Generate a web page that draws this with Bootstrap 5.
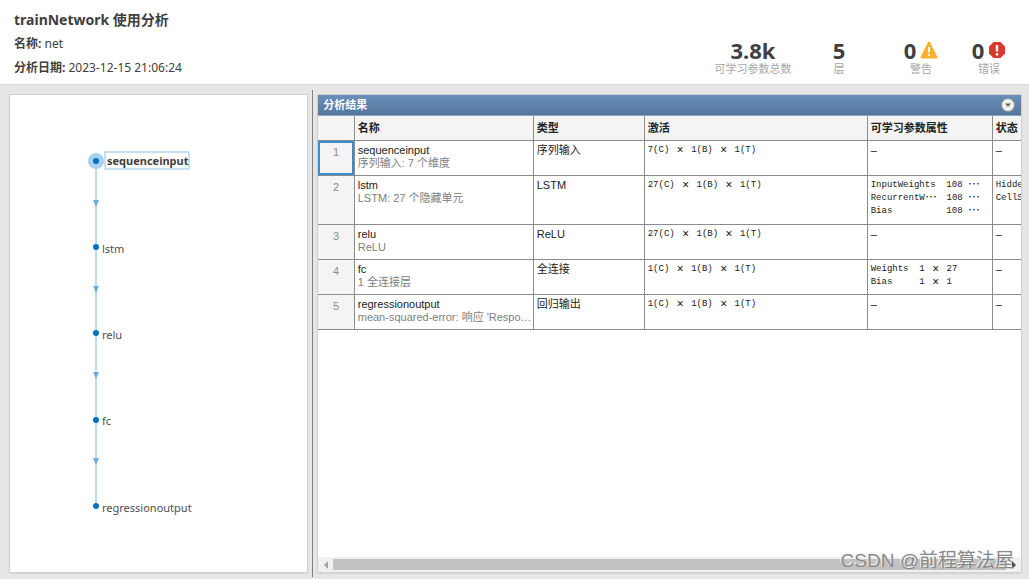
<!DOCTYPE html>
<html lang="zh-CN">
<head>
<meta charset="utf-8">
<meta name="viewport" content="width=device-width, initial-scale=1">
<title>trainNetwork 使用分析</title>
<link href="https://cdn.jsdelivr.net/npm/bootstrap@5.3.0/dist/css/bootstrap.min.css" rel="stylesheet">
<style>
  body { font-family: "Noto Sans", "Noto Sans CJK SC", sans-serif; font-size: 12px; line-height: 16px; color: #404040; background: #e6e6e6; }
  .app-head { background: #fff; border-bottom: 1px solid #d9d9d9; padding: 10px 20px 8px 14px; }
  .app-head h1 { font-size: 14px; line-height: 20px; font-weight: 700; margin-bottom: 6px; }
  .meta-line { margin-bottom: 8px; }
  .stats { display: grid; grid-template-columns: 104px 68px 96px 40px; text-align: center; white-space: nowrap; }
  .stat-num { font-size: 22px; line-height: 24px; font-weight: 700; }
  .stat-label { font-size: 11px; line-height: 14px; color: #a6a6a6; }
  .work-area { padding: 5px 8px 2px 10px; }
  .panel { background: #fff; box-shadow: 0 0 0 1px #d0d0d0, 0 1px 2px #bbb; }
  .graph-panel { flex: 0 0 29.4%; margin: 5px 0; }
  .graph-panel svg text { font-size: 11px; fill: #505050; }
  .graph-panel svg .picked { font-weight: 700; fill: #404040; }
  .splitter { flex: none; width: 1px; margin: 0 5px; background: #808080; }
  .result-panel { flex: 1 1 0; min-width: 0; margin: 5px 0; }
  .panel-title { height: 21px; padding: 0 6px 0 5px; background: linear-gradient(#6a8fb9, #54779f); color: #fff; border-bottom: 1px solid #8fa4bd; }
  .panel-title h2 { font-size: 11px; line-height: 20px; font-weight: 700; margin: 0; }
  .fold { width: 14px; height: 14px; border-radius: 50%; border: 1px solid #8c8c8c; background: #f2f2f2; padding: 0; line-height: 0; }
  .net-table { table-layout: fixed; width: 100%; font-family: "Liberation Sans", "Noto Sans CJK SC", sans-serif; font-size: 11px; line-height: 13px; color: #222; border-collapse: collapse; }
  .net-table th, .net-table td { vertical-align: top; white-space: nowrap; overflow: hidden; padding: 3px 0 5px 3px; height: 35px; border: solid #8c8c8c; border-width: 0 0 1px 1px; }
  .net-table th:first-child { border-left: 0; }
  .net-table thead th { height: 24px; background: #f4f4f4; vertical-align: middle; padding: 4px 0 2px 3px; }
  .net-table tbody th { background: #f4f4f4; color: #8c8c8c; font-weight: 400; text-align: center; padding: 5px 0 3px; }
  .net-table tbody tr.tall td { height: 49px; }
  .net-table tbody th.current { box-shadow: inset 0 0 0 2px #3a8ccb; }
  .note { color: #808080; }
  .net-table .dims { font-family: "Liberation Mono", "Noto Sans CJK SC", monospace; font-size: 9px; white-space: pre; color: #222; }
  .wide { display: inline-block; width: 11px; height: 9px; text-align: center; font-family: "Noto Sans", sans-serif; font-size: 12px; line-height: 9px; vertical-align: -2px; }
  .hbar { height: 15px; background: #f1f1f1; }
  .hbar button { width: 15px; padding: 0; border: 0; background: none; line-height: 0; }
  .thumb { background: #c1c1c1; margin: 2px 0; }
  .watermark { right: 15px; bottom: 5px; font-family: "Liberation Sans", "Noto Sans CJK SC", sans-serif; font-size: 19px; line-height: 26px; color: #8a8a8a; text-shadow: -1px -1px 0 #f4f4f4; pointer-events: none; }
</style>
</head>
<body class="d-flex flex-column min-vh-100">

<header class="app-head d-flex justify-content-between align-items-end">
  <div>
    <h1>trainNetwork 使用分析</h1>
    <div class="meta-line"><strong>名称:</strong> net</div>
    <div><strong>分析日期:</strong> 2023-12-15 21:06:24</div>
  </div>
  <div class="stats">
    <div><div class="stat-num">3.8k</div><div class="stat-label">可学习参数总数</div></div>
    <div><div class="stat-num">5</div><div class="stat-label">层</div></div>
    <div>
      <div class="stat-num d-flex justify-content-center align-items-center gap-1">0
        <svg width="18" height="18" viewBox="0 0 18 18" aria-hidden="true"><path d="M9 1.5 16.5 16.5H1.5Z" fill="#fbb12d" stroke="#fbb12d" stroke-width="2" stroke-linejoin="round"/><path d="M9 6v5.500M9 13v2" stroke="#fff" stroke-width="2"/></svg>
      </div>
      <div class="stat-label">警告</div>
    </div>
    <div>
      <div class="stat-num d-flex justify-content-center align-items-center gap-1">0
        <svg width="18" height="18" viewBox="0 0 18 18" aria-hidden="true"><path d="M5.500 1h7L17 5.500v7L12.500 17h-7L1 12.500v-7Z" fill="#d9382b"/><path d="M9 4v6.500M9 12v2.500" stroke="#fff" stroke-width="2.400"/></svg>
      </div>
      <div class="stat-label">错误</div>
    </div>
  </div>
</header>

<main class="work-area d-flex flex-grow-1">
  <section class="panel graph-panel">
    <svg width="100%" height="440" role="img" aria-label="网络图">
      <g stroke="#bcdcf0" stroke-width="2"><path d="M86 66V411"/></g>
      <g fill="#6aaedb"><path d="M83 105h6l-3 7ZM83 191h6l-3 7ZM83 277h6l-3 7ZM83 363h6l-3 7Z"/></g>
      <circle cx="86" cy="66" r="8" fill="#a9d0ec"/>
      <g fill="#0072bd">
        <circle cx="86" cy="66" r="3"/><circle cx="86" cy="152" r="3"/><circle cx="86" cy="238" r="3"/><circle cx="86" cy="325" r="3"/><circle cx="86" cy="411" r="3"/>
      </g>
      <rect x="95" y="57" width="84" height="17" fill="#fff" stroke="#8cc3e4"/>
      <text class="picked" x="97" y="70">sequenceinput</text>
      <text x="92" y="158">lstm</text>
      <text x="92" y="244">relu</text>
      <text x="92" y="330">fc</text>
      <text x="92" y="417">regressionoutput</text>
    </svg>
  </section>

  <div class="splitter"></div>

  <section class="panel result-panel d-flex flex-column">
    <div class="panel-title d-flex justify-content-between align-items-center">
      <h2>分析结果</h2>
      <button type="button" class="fold" aria-label="折叠"><svg width="12" height="12" viewBox="0 0 12 12"><path d="M3 4.500h6L6 8Z" fill="#666"/></svg></button>
    </div>
    <div class="overflow-hidden flex-grow-1">
      <table class="net-table">
        <colgroup><col style="width:36px"><col style="width:179px"><col style="width:111px"><col style="width:223px"><col style="width:125px"><col></colgroup>
        <thead>
          <tr><th></th><th>名称</th><th>类型</th><th>激活</th><th>可学习参数属性</th><th>状态</th></tr>
        </thead>
        <tbody>
          <tr>
            <th class="current">1</th>
            <td>sequenceinput<div class="note">序列输入: 7 个维度</div></td>
            <td>序列输入</td>
            <td class="dims">7(C) <span class="wide">×</span> 1(B) <span class="wide">×</span> 1(T)</td>
            <td>–</td><td>–</td>
          </tr>
          <tr class="tall">
            <th>2</th>
            <td>lstm<div class="note">LSTM: 27 个隐藏单元</div></td>
            <td>LSTM</td>
            <td class="dims">27(C) <span class="wide">×</span> 1(B) <span class="wide">×</span> 1(T)</td>
            <td class="dims">InputWeights  108 <span class="wide">⋯</span>
RecurrentW<span class="wide">⋯</span>  108 <span class="wide">⋯</span>
Bias          108 <span class="wide">⋯</span></td>
            <td class="dims">HiddenState
CellState</td>
          </tr>
          <tr>
            <th>3</th>
            <td>relu<div class="note">ReLU</div></td>
            <td>ReLU</td>
            <td class="dims">27(C) <span class="wide">×</span> 1(B) <span class="wide">×</span> 1(T)</td>
            <td>–</td><td>–</td>
          </tr>
          <tr>
            <th>4</th>
            <td>fc<div class="note">1 全连接层</div></td>
            <td>全连接</td>
            <td class="dims">1(C) <span class="wide">×</span> 1(B) <span class="wide">×</span> 1(T)</td>
            <td class="dims">Weights  1 <span class="wide">×</span> 27
Bias     1 <span class="wide">×</span> 1</td>
            <td>–</td>
          </tr>
          <tr>
            <th>5</th>
            <td>regressionoutput<div class="note">mean-squared-error: 响应 'Respo…</div></td>
            <td>回归输出</td>
            <td class="dims">1(C) <span class="wide">×</span> 1(B) <span class="wide">×</span> 1(T)</td>
            <td>–</td><td>–</td>
          </tr>
        </tbody>
      </table>
    </div>
    <div class="hbar d-flex">
      <button type="button" aria-label="向左滚动"><svg width="8" height="8" viewBox="0 0 8 8"><path d="M6 0v8L2 4Z" fill="#a3a3a3"/></svg></button>
      <div class="thumb flex-grow-1"></div>
      <button type="button" aria-label="向右滚动"><svg width="8" height="8" viewBox="0 0 8 8"><path d="M2 0v8L6 4Z" fill="#505050"/></svg></button>
    </div>
  </section>
</main>

<div class="watermark position-absolute">CSDN @前程算法屋</div>

<script src="https://cdn.jsdelivr.net/npm/bootstrap@5.3.0/dist/js/bootstrap.bundle.min.js"></script>
</body>
</html>
